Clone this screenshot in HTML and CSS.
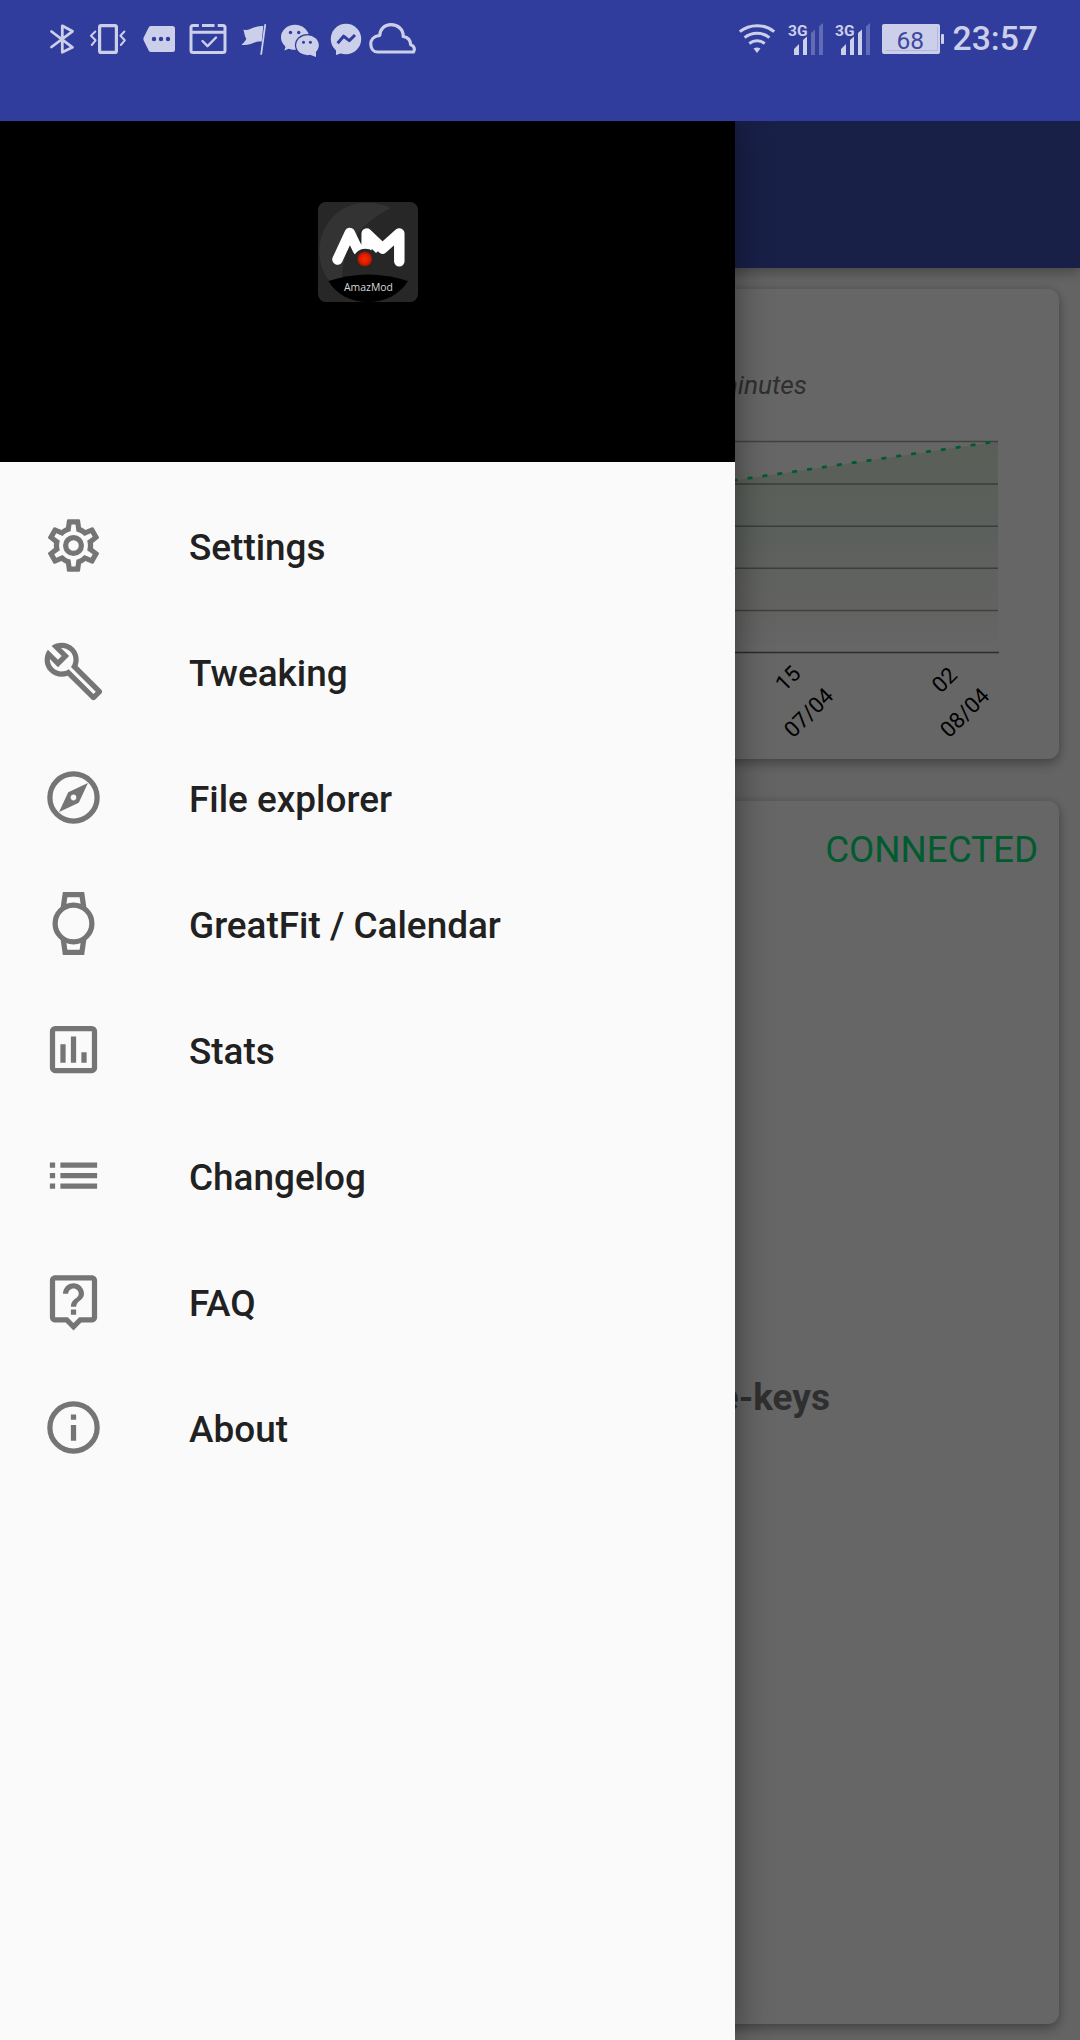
FILE: index.html
```html
<!DOCTYPE html>
<html lang="en">
<head>
<meta charset="utf-8">
<title>AmazMod</title>
<link rel="stylesheet" href="styles.css">
</head>
<body>
<div class="app">
  <header class="status">
    <div class="status-group">
      <svg width="38" height="44" viewBox="45 18 38 44"><path class="line" stroke-width="2.8" d="M51.5 31.5L72.5 47.3L62.3 52.2V25.8L72.5 31.3L51.5 47"/></svg>
      <svg width="52" height="44" viewBox="83 18 52 44"><rect class="line" stroke-width="3.2" x="99.6" y="25.6" width="16.8" height="26.8" rx="1.5"/><path class="line" stroke-width="2" d="M95.3 31.5L91 35.7L95.6 40.3L91.8 45M124.4 31.5L120.4 35.7L124.8 40.3L120.8 45"/></svg>
      <svg width="47" height="44" viewBox="135 18 47 44"><path class="solid" fill-rule="evenodd" d="M151 26H172.500Q175 26 175 28.500V49.500Q175 52 172.500 52H151Q149.500 52 148.800 50.800L143.700 40.500Q143 39 143.700 37.500L148.800 27.200Q149.500 26 151 26ZM156.200 39a2.200 2.200 0 1 0 -4.400 0a2.200 2.200 0 1 0 4.400 0M163.200 39a2.200 2.200 0 1 0 -4.400 0a2.200 2.200 0 1 0 4.400 0M170.200 39a2.200 2.200 0 1 0 -4.400 0a2.200 2.200 0 1 0 4.400 0"/></svg>
      <svg width="52" height="44" viewBox="182 18 52 44"><path class="line butt" stroke-width="3" d="M198.800 25.500H193Q191 25.500 191 27.500V50.500Q191 52.500 193 52.500H223Q225 52.500 225 50.500V27.500Q225 25.500 223 25.500H217.700M202 25.500H214.500M191 32.300H225"/><path class="line" stroke-width="2.400" d="M202.500 41L207.500 46.200L216 37.500"/></svg>
      <svg width="42" height="44" viewBox="234 18 42 44"><path class="solid" d="M243.300 29.500C249 32 254 25 263.300 26L261.700 41.500C254 40.500 251 46 241.300 44.800C243.500 43 245.800 40.500 246.300 38.700C244.500 36.500 244.500 32.500 243.300 29.500Z"/><path class="line" stroke-width="1.800" d="M265.200 24.800L261.200 54"/></svg>
      <svg width="49" height="44" viewBox="276 18 49 44"><ellipse class="solid" cx="295" cy="37.300" rx="14" ry="12.500"/><path class="solid" d="M286.500 44L284.300 50.500L292 47.500Z"/><circle class="gap" cx="290.500" cy="32.500" r="1.700"/><circle class="gap" cx="298.700" cy="32.500" r="1.700"/><ellipse class="gap" cx="307.500" cy="45.200" rx="12.600" ry="11.200"/><ellipse class="solid" cx="307.500" cy="45.200" rx="11.300" ry="10"/><path class="solid" d="M316 50L316 57L308 54Z"/><circle class="gap" cx="303.500" cy="42.300" r="1.500"/><circle class="gap" cx="310.400" cy="42.300" r="1.500"/></svg>
      <svg width="40" height="44" viewBox="325 18 40 44"><circle class="solid" cx="346" cy="39" r="15.200"/><path class="solid" d="M336 46V55L345 52Z"/><path class="gap-line" d="M337.600 43.300L343.600 36.200L349.300 40.600L355 35"/></svg>
      <svg width="56" height="44" viewBox="365 18 56 44"><path class="line" stroke-width="3.200" d="M377.500 52H413.500C415.300 49.500 414.500 46 410.700 44.800C410.500 40 408 37.200 403.200 36.500C403.500 29.500 398 24.700 391 24.700C384 24.700 380 29.500 379.800 35.300C373.500 36 370.500 40 370.800 44.500C371 48.500 373.500 52 377.500 52Z"/></svg>
    </div>
    <div class="status-group status-right">
      <svg width="48" height="44" viewBox="735 18 48 44"><path class="line butt" stroke-width="3" d="M739.800 31.700A27.500 27.500 0 0 1 774.200 31.700M744.600 37.600A20 20 0 0 1 769.400 37.600M749.300 43.500A12.600 12.600 0 0 1 764.700 43.500"/><path class="solid" d="M753.500 48.600Q757 46.500 760.500 48.600L757 53Z"/></svg>
      <svg width="47" height="44" viewBox="783 18 47 44"><path class="solid" d="M794 49L799 44V55H794ZM803 40L807 36.500V55H803Z"/><path class="dim" d="M811 33L815 29.500V55H811ZM819 26.500L823 23V55H819Z"/><text class="net" x="788" y="36.200">3G</text></svg>
      <svg width="47" height="44" viewBox="830 18 47 44"><path class="solid" d="M841 49L846 44V55H841ZM850 40L854 36.500V55H850ZM858 33L862 29.500V55H858Z"/><path class="dim" d="M866 26.500L870 23V55H866Z"/><text class="net" x="835" y="36.200">3G</text></svg>
      <svg width="72" height="44" viewBox="877 18 72 44"><rect class="solid" x="882" y="24" width="58" height="30" rx="2"/><rect class="solid" x="941" y="34" width="3" height="10" rx="1"/><path class="dim-line" d="M885.500 50.500H937.500V27"/><text class="charge" x="910.200" y="48.500" text-anchor="middle">68</text></svg>
      <span class="clock">23:57</span>
    </div>
  </header>

  <div class="stage">
    <main class="screen">
      <div class="toolbar"></div>
      <div class="cards">
        <section class="card battery">
          <p class="updated">minutes</p>
          <svg class="chart" width="1038" height="360" viewBox="21 399 1038 360">
            <defs><linearGradient id="fade" x1="0" y1="0" x2="0" y2="1"><stop offset="0" stop-color="#4b9130" stop-opacity=".17"/><stop offset=".5" stop-color="#4b9150" stop-opacity=".13"/><stop offset=".8" stop-color="#8a9a58" stop-opacity=".07"/><stop offset="1" stop-color="#a09080" stop-opacity="0"/></linearGradient></defs>
            <path fill="url(#fade)" d="M600 500L998 441.500V652.500H600Z"/>
            <path class="grid" d="M600 441.500H998M600 484H998M600 526.200H998M600 568.300H998M600 610.400H998"/>
            <path class="axis" d="M600 652.600H999"/>
            <path class="series" d="M732.700 480.600L998 441.300"/>
            <g class="ticks">
              <text transform="translate(787.700 678) rotate(-45)" y="8">15</text>
              <text transform="translate(808.300 712.300) rotate(-45)" y="8">07/04</text>
              <text transform="translate(944 679.500) rotate(-45)" y="8">02</text>
              <text transform="translate(964.300 712.300) rotate(-45)" y="8">08/04</text>
            </g>
          </svg>
        </section>
        <section class="card watch">
          <p class="state">CONNECTED</p>
          <p class="device">e-keys</p>
        </section>
      </div>
    </main>
    <div class="scrim"></div>
    <aside class="drawer">
      <div class="drawer-head">
        <svg class="logo" width="100" height="100" viewBox="18 12 100 100">
          <defs>
            <clipPath id="tile"><rect x="18" y="12" width="100" height="100" rx="8"/></clipPath>
            <radialGradient id="led"><stop offset="0" stop-color="#f52a00"/><stop offset=".6" stop-color="#df1e00"/><stop offset="1" stop-color="#a81500"/></radialGradient>
          </defs>
          <g clip-path="url(#tile)">
            <rect x="18" y="12" width="100" height="100" fill="#272727"/>
            <path fill="#333" d="M91 18C75 10 50 10 35 25C18 40 14 68 27 88Q31 94 43 98C38 62 58 34 91 18Z"/>
            <path fill="#000" d="M28.500 91Q68 78 108 91C100 104 86 112 68 112C50 112 36 104 28.500 91Z"/>
          </g>
          <path fill="none" stroke="#fff" stroke-width="10.500" stroke-linecap="round" stroke-linejoin="round" d="M37.500 69.500L49.800 43L58 60M66.700 58V43.500L82.500 58.500L99.300 43.500V71.200"/>
          <path fill="#fff" d="M56 56L61.500 56L62 50L72 49L79 60L76 63L72 59L66 60Z"/>
          <path fill="#272727" d="M54 66.500Q57 59 65 58.800Q70 58.800 72.500 61L74 63L75 70L65 78L54 70Z"/>
          <circle cx="64.700" cy="69" r="7.300" fill="url(#led)"/>
          <text class="logo-name" x="68.500" y="100.500" text-anchor="middle" textLength="49" lengthAdjust="spacingAndGlyphs">AmazMod</text>
        </svg>
      </div>
      <nav class="menu">
        <a class="item"><svg class="icon" viewBox="0 0 24 24"><path d="M12,8A4,4 0 0,1 16,12A4,4 0 0,1 12,16A4,4 0 0,1 8,12A4,4 0 0,1 12,8M12,10A2,2 0 0,0 10,12A2,2 0 0,0 12,14A2,2 0 0,0 14,12A2,2 0 0,0 12,10M10,22C9.750,22 9.540,21.820 9.500,21.580L9.130,18.930C8.500,18.680 7.960,18.340 7.440,17.940L4.950,18.950C4.730,19.030 4.460,18.950 4.340,18.730L2.340,15.270C2.210,15.050 2.270,14.780 2.460,14.630L4.570,12.970L4.500,12L4.570,11L2.460,9.370C2.270,9.220 2.210,8.950 2.340,8.730L4.340,5.270C4.460,5.050 4.730,4.960 4.950,5.050L7.440,6.050C7.960,5.660 8.500,5.320 9.130,5.070L9.500,2.420C9.540,2.180 9.750,2 10,2H14C14.250,2 14.460,2.180 14.500,2.420L14.870,5.070C15.500,5.320 16.040,5.660 16.560,6.050L19.050,5.050C19.270,4.960 19.540,5.050 19.660,5.270L21.660,8.730C21.790,8.950 21.730,9.220 21.540,9.370L19.430,11L19.500,12L19.430,13L21.540,14.630C21.730,14.780 21.790,15.050 21.660,15.270L19.660,18.730C19.540,18.950 19.270,19.040 19.050,18.950L16.560,17.950C16.040,18.340 15.500,18.680 14.870,18.930L14.500,21.580C14.460,21.820 14.250,22 14,22H10M11.250,4L10.880,6.610C9.680,6.860 8.620,7.500 7.850,8.390L5.440,7.350L4.690,8.650L6.800,10.200C6.400,11.370 6.400,12.640 6.800,13.800L4.680,15.360L5.430,16.660L7.860,15.620C8.630,16.500 9.680,17.140 10.870,17.380L11.240,20H12.760L13.130,17.390C14.320,17.140 15.370,16.500 16.140,15.620L18.570,16.660L19.320,15.360L17.200,13.810C17.600,12.640 17.600,11.370 17.200,10.200L19.310,8.650L18.560,7.350L16.150,8.390C15.380,7.500 14.320,6.860 13.120,6.620L12.750,4H11.250Z"/></svg><span>Settings</span></a>
        <a class="item"><svg class="icon" viewBox="0 0 24 24"><path fill-rule="evenodd" d="M22.610 18.990l-9.080-9.080c.93-2.340.45-5.100-1.440-7C9.790.61 6.210.4 3.660 2.260L7.500 6.110 6.080 7.520 2.250 3.690C.39 6.230.6 9.820 2.900 12.110c1.860 1.860 4.570 2.350 6.890 1.480l9.110 9.110c.39.39 1.020.39 1.410 0l2.300-2.300c.4-.38.4-1.010 0-1.410zm-3 1.600l-9.460-9.460c-.61.45-1.290.72-2 .82-1.360.2-2.790-.21-3.830-1.250C3.370 9.760 2.930 8.500 3 7.260l3.090 3.090 4.240-4.240-3.090-3.090c1.240-.07 2.490.37 3.440 1.310 1.080 1.080 1.490 2.570 1.240 3.960-.12.71-.42 1.370-.88 1.960l9.450 9.450-.88.89z"/></svg><span>Tweaking</span></a>
        <a class="item"><svg class="icon" viewBox="0 0 24 24"><circle class="ring" cx="12" cy="12" r="9"/><path fill-rule="evenodd" d="M6.500 17.500l7.510-3.490L17.500 6.500 9.990 9.990 6.500 17.500zm5.500-6.600c.61 0 1.100.49 1.100 1.100s-.49 1.100-1.100 1.100-1.100-.49-1.100-1.100.49-1.100 1.100-1.100z"/></svg><span>File explorer</span></a>
        <a class="item"><svg class="icon" viewBox="0 0 24 24"><circle class="ring" cx="12" cy="12" r="7"/><path class="ring" d="M8 6.600L8.800 1H15.200L16 6.600M8 17.400L8.800 23H15.200L16 17.400"/></svg><span>GreatFit / Calendar</span></a>
        <a class="item"><svg class="icon" viewBox="0 0 24 24"><rect class="ring" x="4" y="4" width="16" height="16" rx="1"/><path d="M7 10h2v7H7zM11 7h2v10h-2zM15 13h2v4h-2z"/></svg><span>Stats</span></a>
        <a class="item"><svg class="icon" viewBox="0 0 24 24"><path d="M3 7h2v2H3zM3 11h2v2H3zM3 15h2v2H3zM7 7h14v2H7zM7 11h14v2H7zM7 15h14v2H7z"/></svg><span>Changelog</span></a>
        <a class="item"><svg class="icon" viewBox="0 0 24 24"><path fill-rule="evenodd" d="M19 2H5c-1.110 0-2 .9-2 2v14c0 1.100.89 2 2 2h4l3 3 3-3h4c1.100 0 2-.9 2-2V4c0-1.100-.9-2-2-2zm0 16h-4.830L12 20.170 9.830 18H5V4h14v14zm-8-3h2v2h-2zm1-8c1.100 0 2 .9 2 2 0 2-3 1.750-3 5h2c0-2.250 3-2.500 3-5 0-2.210-1.790-4-4-4s-4 1.790-4 4h2c0-1.100.9-2 2-2z"/></svg><span>FAQ</span></a>
        <a class="item"><svg class="icon" viewBox="0 0 24 24"><circle class="ring" cx="12" cy="12" r="9"/><path d="M11 7h2v2h-2zM11 11h2v6h-2z"/></svg><span>About</span></a>
      </nav>
    </aside>
  </div>
</div>
</body>
</html>
```

FILE: styles.css
```css
* { box-sizing: border-box; }
body { margin: 0; font-family: Roboto, "Liberation Sans", sans-serif; }
p { margin: 0; }
svg { display: block; flex: none; }

.app { width: 1080px; height: 2040px; display: flex; flex-direction: column; overflow: hidden; }

/* Status bar */
.status { height: 121px; flex: none; display: flex; justify-content: space-between; align-items: flex-start; padding: 18px 42px 0 45px; background: #303d9d; }
.status-group { display: flex; height: 44px; }
.line { fill: none; stroke: #cccfe9; stroke-linecap: round; stroke-linejoin: round; }
.butt { stroke-linecap: butt; }
.solid { fill: #cccfe9; }
.gap { fill: #303d9d; }
.gap-line { fill: none; stroke: #303d9d; stroke-width: 3; stroke-linejoin: round; }
.dim { fill: #626cb5; }
.dim-line { fill: none; stroke: #b2b7dd; stroke-width: 1; }
.net { font-size: 15.5px; font-weight: 700; fill: #cccfe9; }
.charge { font-size: 24.5px; fill: #3c48a2; }
.clock { width: 89px; padding-left: 3.5px; font-size: 33.7px; font-weight: 500; line-height: 42px; color: #cccfe9; white-space: nowrap; }

.stage { position: relative; flex: 1; overflow: hidden; }

/* Main screen */
.screen { height: 100%; background: #fafafa; display: flex; flex-direction: column; }
.toolbar { height: 147px; flex: none; background: #3f51b5; box-shadow: 0 4px 12px rgba(0, 0, 0, .3); }
.cards { display: flex; flex-direction: column; gap: 42px; padding: 21px 21px 0; }
.card { border-radius: 11px; background: #fff; box-shadow: 0 5px 12px rgba(0, 0, 0, .28), 0 0 8px rgba(0, 0, 0, .12); }
.battery { height: 470px; display: flex; flex-direction: column; justify-content: flex-end; }
.updated { padding-right: 252px; margin-bottom: -2px; text-align: right; font-size: 26.25px; line-height: 32px; font-style: italic; color: #757575; }
.grid { fill: none; stroke: #000; stroke-opacity: .36; stroke-width: 1.5; }
.axis { fill: none; stroke: #6c6c6c; stroke-width: 1.5; }
.series { fill: none; stroke: #00e676; stroke-width: 2.8; stroke-dasharray: 5 10.03; }
.ticks { font-size: 22px; text-anchor: middle; }
.watch { height: 1223px; }
.state { padding: 27px 21px 0 0; text-align: right; font-size: 36.75px; line-height: 44px; color: #00e676; }
.device { padding: 504px 229px 0 0; text-align: right; font-size: 37px; line-height: 44px; font-weight: 700; color: #757575; }

.scrim { position: absolute; inset: 0; background: rgba(0, 0, 0, .6); }

/* Navigation drawer */
.drawer { position: absolute; inset: 0 auto 0 0; width: 735px; background: #fafafa; box-shadow: 0 0 34px rgba(0, 0, 0, .45); }
.drawer-head { height: 341px; padding-top: 81px; display: flex; justify-content: center; align-items: flex-start; background: #000; }
.logo-name { font-family: "Open Sans", sans-serif; font-size: 11.5px; fill: #d8d8d8; }
.menu { display: flex; flex-direction: column; padding-top: 20px; }
.item { height: 126px; display: flex; align-items: center; gap: 84px; padding-left: 42px; font-size: 36.9px; font-weight: 500; color: #212121; }
.item span { padding-top: 5px; }
.icon { width: 63px; height: 63px; fill: #757575; }
.ring { fill: none; stroke: #757575; stroke-width: 2; }
```
